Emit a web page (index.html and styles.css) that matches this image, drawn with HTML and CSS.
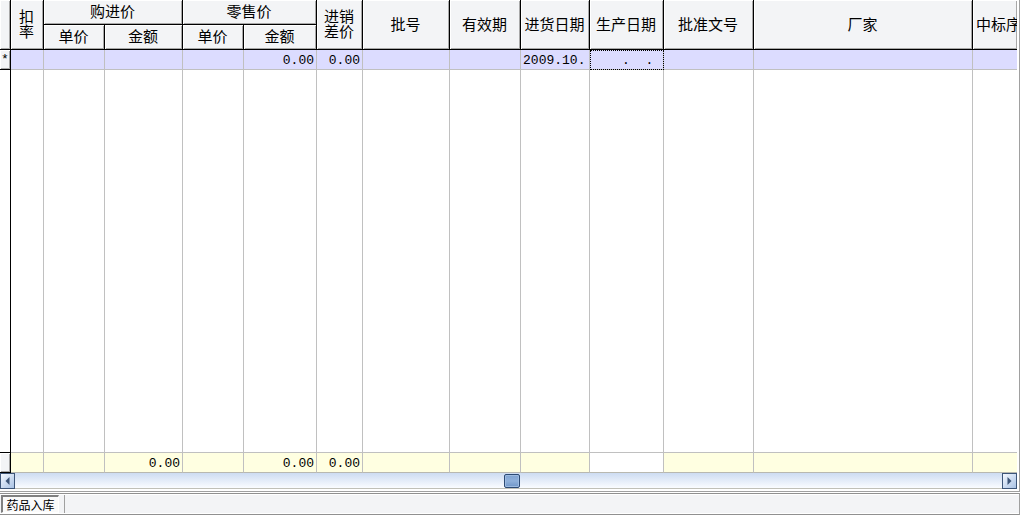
FILE: index.html
```html
<!DOCTYPE html>
<html lang="zh-CN">
<head>
    <meta charset="UTF-8">
    <meta name="viewport" content="width=device-width, initial-scale=1.0">
    <title>药品入库</title>
    <link rel="stylesheet" href="styles.css">
</head>
<body>
    <main class="panel">
        <div class="grid-wrap">
            <table class="grid">
                <colgroup>
                    <col class="w-mark">
                    <col class="w-rate">
                    <col class="w-price">
                    <col class="w-buy">
                    <col class="w-price">
                    <col class="w-sell">
                    <col class="w-diff">
                    <col class="w-batch">
                    <col class="w-valid">
                    <col class="w-indate">
                    <col class="w-made">
                    <col class="w-permit">
                    <col class="w-maker">
                    <col>
                </colgroup>
                <thead>
                    <tr>
                        <th rowspan="2" class="mark"></th>
                        <th rowspan="2" class="two-line">扣<br>率</th>
                        <th colspan="2">购进价</th>
                        <th colspan="2">零售价</th>
                        <th rowspan="2" class="two-line">进销<br>差价</th>
                        <th rowspan="2">批号</th>
                        <th rowspan="2">有效期</th>
                        <th rowspan="2">进货日期</th>
                        <th rowspan="2">生产日期</th>
                        <th rowspan="2">批准文号</th>
                        <th rowspan="2">厂家</th>
                        <th rowspan="2" class="cut">中标序</th>
                    </tr>
                    <tr>
                        <th>单价</th>
                        <th>金额</th>
                        <th>单价</th>
                        <th>金额</th>
                    </tr>
                </thead>
                <tbody>
                    <tr class="current">
                        <th class="mark">*</th>
                        <td></td>
                        <td></td>
                        <td></td>
                        <td></td>
                        <td>0.00</td>
                        <td>0.00</td>
                        <td></td>
                        <td></td>
                        <td class="date">2009.10.</td>
                        <td class="focus">.&nbsp; .&nbsp;</td>
                        <td></td>
                        <td></td>
                        <td></td>
                    </tr>
                    <tr class="blank">
                        <td class="mark"></td>
                        <td></td><td></td><td></td><td></td><td></td><td></td>
                        <td></td><td></td><td></td><td></td><td></td><td></td><td></td>
                    </tr>
                </tbody>
                <tfoot>
                    <tr>
                        <th class="mark"></th>
                        <td></td>
                        <td></td>
                        <td>0.00</td>
                        <td></td>
                        <td>0.00</td>
                        <td>0.00</td>
                        <td></td>
                        <td></td>
                        <td></td>
                        <td class="white"></td>
                        <td></td>
                        <td></td>
                        <td></td>
                    </tr>
                </tfoot>
            </table>
        </div>
        <div class="scrollbar">
            <button type="button" class="arrow" aria-label="向左滚动">
                <svg width="5" height="8" viewBox="0 0 5 8"><path d="M4.5 0v8L.5 4z" fill="#3d5578"/></svg>
            </button>
            <input type="range" class="track" min="0" max="1000" value="504" aria-label="水平滚动">
            <button type="button" class="arrow" aria-label="向右滚动">
                <svg width="5" height="8" viewBox="0 0 5 8"><path d="M.5 0v8l4-4z" fill="#3d5578"/></svg>
            </button>
        </div>
    </main>
    <footer class="tabs">
        <button type="button" class="tab">药品入库</button>
        <span class="divider"></span>
    </footer>
</body>
</html>
```

FILE: styles.css
```css
* { box-sizing: border-box; }
body { margin: 0; height: 100vh; display: flex; flex-direction: column; background: #fff; color: #000; font-family: "Noto Sans CJK SC", sans-serif; font-size: 15px; }
button { padding: 0; margin: 0; font: inherit; color: inherit; }

.panel { flex: 1; min-height: 0; display: flex; flex-direction: column; padding: 0 2px 2px 0; border-right: 1px solid #a0a0a0; border-bottom: 1px solid #a0a0a0; }
.grid-wrap { flex: 1; min-height: 0; overflow: hidden; }

/* grid */
.grid { width: 100%; height: 100%; table-layout: fixed; border-collapse: separate; border-spacing: 0; }
.w-mark { width: 11px; }
.w-rate { width: 33px; }
.w-price { width: 61px; }
.w-buy { width: 78px; }
.w-sell { width: 73px; }
.w-diff { width: 46px; }
.w-batch { width: 87px; }
.w-valid { width: 71px; }
.w-indate { width: 69px; }
.w-made { width: 74px; }
.w-permit { width: 90px; }
.w-maker { width: 219px; }

.grid th, .grid td { padding: 0; overflow: hidden; white-space: nowrap; }
.grid th { font-weight: 400; line-height: 20px; text-align: center; background: #f3f4f6; border-right: 1px solid #000; border-bottom: 1px solid #000; box-shadow: inset 1px 1px #fff, inset -1px -1px #a8a8a8; }
.grid thead tr { height: 25px; }
.grid thead th { padding: 0 1px 2px 0; }
.grid thead .two-line { padding-bottom: 4px; line-height: 15px; }
.grid thead .cut { padding-left: 3px; text-align: left; }
.grid thead th:last-child.cut, .grid td:last-child { border-right: 0; }

.grid td { border-right: 1px solid #c0c0c0; border-bottom: 1px solid #c0c0c0; font-family: "Liberation Mono", monospace; font-size: 13px; line-height: 17px; text-align: right; padding: 2px 2px 0 0; }
.grid .mark { border-right: 1px solid #000; border-bottom: 1px solid #000; font-family: "Liberation Mono", monospace; font-size: 13px; line-height: 17px; }
.current, .grid tfoot tr { height: 20px; }
.current td { background: #dcdcff; }
.grid .date { padding-left: 2px; text-align: left; }
.grid .focus { outline: 1px dotted #000; outline-offset: -1px; }
.grid tfoot td { background: #ffffe1; border-bottom-color: #b8b8b0; }
.grid tfoot .white { background: #fff; }

/* horizontal scrollbar */
.scrollbar { display: flex; height: 16px; border-bottom: 1px solid #c0c0b8; background: linear-gradient(#cddcf2, #fafcff); }
.arrow { display: flex; align-items: center; justify-content: center; width: 15px; height: 16px; border: 1px solid #3d5578; background: linear-gradient(135deg, #f4f8ff, #a9c2e4); }
.track { flex: 1; min-width: 0; height: 15px; margin: 0; appearance: none; -webkit-appearance: none; background: none; }
.track::-webkit-slider-thumb { -webkit-appearance: none; width: 16px; height: 14px; border: 1px solid #2c4a74; border-radius: 2px; background: linear-gradient(#7fa3d1, #8fb0da 50%, #6f96c8); box-shadow: inset 0 0 0 1px #9dbbe0; }

/* bottom tabs */
.tabs { display: flex; align-items: center; height: 22px; padding-left: 1px; margin-top: 1px; border-top: 1px solid #909090; border-bottom: 1px solid #909090; border-right: 1px solid #a0a0a0; background: #f3f4f6; box-shadow: inset 0 1px #fff, inset 0 -1px #fff; }
.tab { height: 18px; width: 58px; border: 1px solid #fff; border-top: 2px solid #808080; border-left: 2px solid #808080; background: #fafafa; font-size: 12px; line-height: 15px; }
.divider { width: 1px; height: 18px; margin-left: 5px; background: #a0a0a0; }
```
